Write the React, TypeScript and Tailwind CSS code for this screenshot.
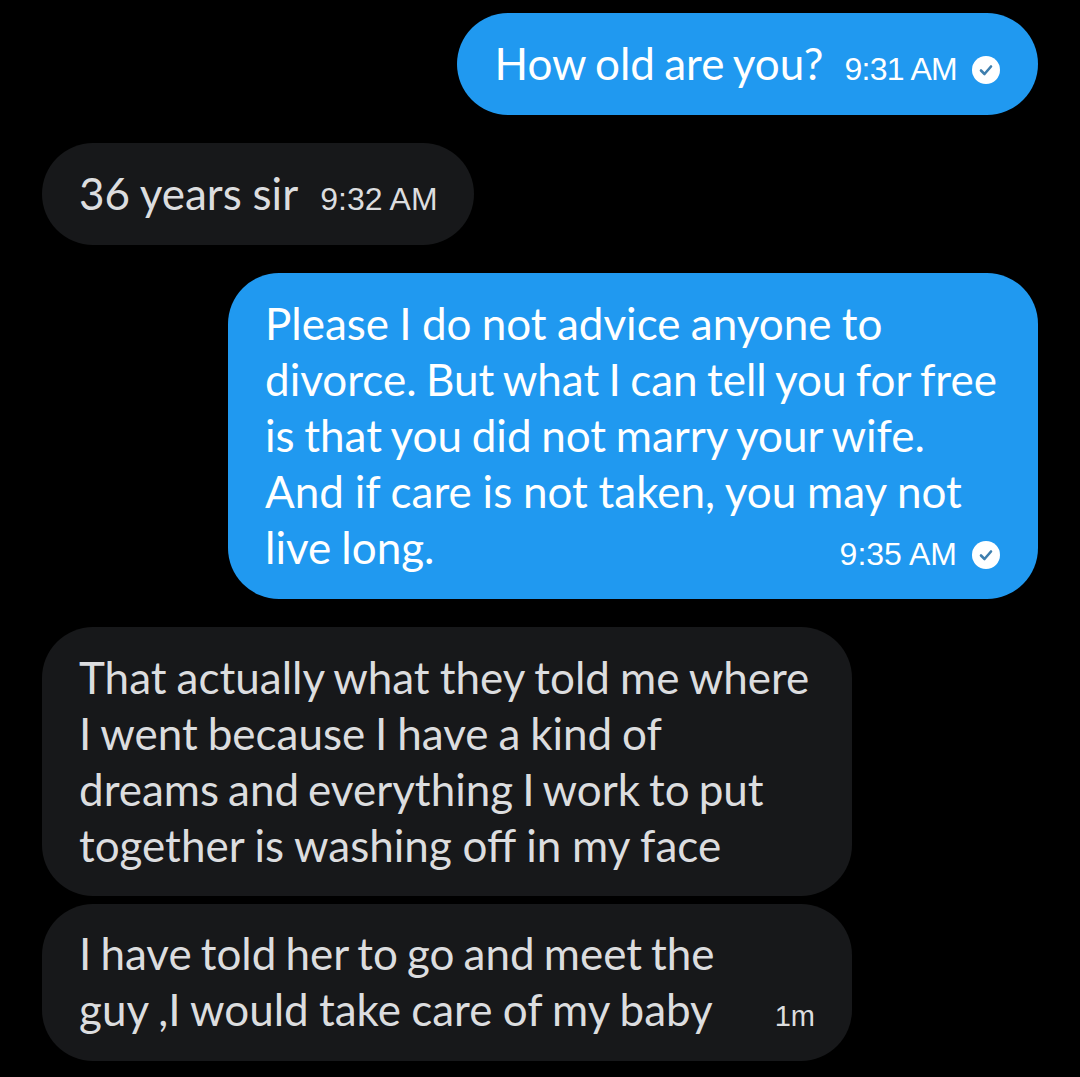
import type { ReactNode } from 'react';

function CheckBadge() {
  return (
    <svg viewBox="0 0 28 28" className="ml-[15px] mt-[2px] h-[28px] w-[28px] shrink-0">
      <circle cx="14" cy="14" r="14" fill="#fff" />
      <path d="M9 14.5l3.5 3.5 6.5-7.5" fill="none" stroke="#3f7fae" strokeWidth="2.6" strokeLinecap="round" strokeLinejoin="round" />
    </svg>
  );
}

function Time({ children, sent, className = '' }: { children: ReactNode; sent?: boolean; className?: string }) {
  return (
    <span className={`flex items-center whitespace-nowrap font-['Liberation_Sans',sans-serif] leading-[36px] ${className}`}>
      {children}
      {sent && <CheckBadge />}
    </span>
  );
}

const bodyText =
  "shrink-0 font-['Lato',sans-serif] text-[44px] leading-[56px] whitespace-nowrap [word-spacing:-1.2px]";
const clock = 'text-[32px] [word-spacing:0px]';

export default function App() {
  return (
    <div className="flex h-[1077px] w-[1080px] flex-col overflow-hidden bg-black pl-[42px] pr-[42px] pt-[13px]">
      <div className={`flex h-[102px] items-center self-end rounded-[51px] bg-[#2099f0] pb-[2px] pl-[38px] pr-[38px] text-white ${bodyText}`}>
        <span className="[word-spacing:-2px]">How old are you?</span>
        <span className="ml-[21px] mt-[12px]">
          <Time sent className={`${clock} tracking-[-0.7px]`}>9:31 AM</Time>
        </span>
      </div>

      <div className={`mt-[28px] flex h-[102px] items-center self-start rounded-[51px] bg-[#17181a] pb-[2px] pl-[37px] pr-[36px] text-[#dcdddf] ${bodyText}`}>
        <span className="[word-spacing:-0.5px]">36 years sir</span>
        <span className="ml-[22px] mt-[12px]">
          <Time className={clock}>9:32 AM</Time>
        </span>
      </div>

      <div className={`mt-[28px] w-[810px] self-end rounded-[51px] bg-[#2099f0] pb-[24px] pl-[37px] pr-[38px] pt-[22px] text-white ${bodyText}`}>
        <div className="[word-spacing:-1px]">Please I do not advice anyone to</div>
        <div className="[word-spacing:-1.9px]">divorce. But what I can tell you for free</div>
        <div className="[word-spacing:-1.6px]">is that you did not marry your wife.</div>
        <div className="[word-spacing:-0.5px]">And if care is not taken, you may not</div>
        <div className="flex items-center justify-between">
          <span>live long.</span>
          <span className="mt-[14px]">
            <Time sent className={clock}>9:35 AM</Time>
          </span>
        </div>
      </div>

      <div className={`mt-[28px] w-[810px] rounded-[51px] bg-[#17181a] pb-[23px] pl-[37px] pr-[37px] pt-[22px] text-[#dcdddf] ${bodyText}`}>
        <div>That actually what they told me where</div>
        <div className="[word-spacing:-1.4px]">I went because I have a kind of</div>
        <div className="[word-spacing:-2.3px]">dreams and everything I work to put</div>
        <div className="[word-spacing:-0.5px]">together is washing off in my face</div>
      </div>

      <div className={`mt-[8px] w-[810px] rounded-[51px] bg-[#17181a] pb-[24px] pl-[37px] pr-[37px] pt-[21px] text-[#dcdddf] ${bodyText}`}>
        <div className="[word-spacing:-2.2px]">I have told her to go and meet the</div>
        <div className="flex items-center justify-between">
          <span className="[word-spacing:-1px]">guy ,I would take care of my baby</span>
          <span className="mt-[14px]">
            <Time className="text-[29px]">1m</Time>
          </span>
        </div>
      </div>
    </div>
  );
}
